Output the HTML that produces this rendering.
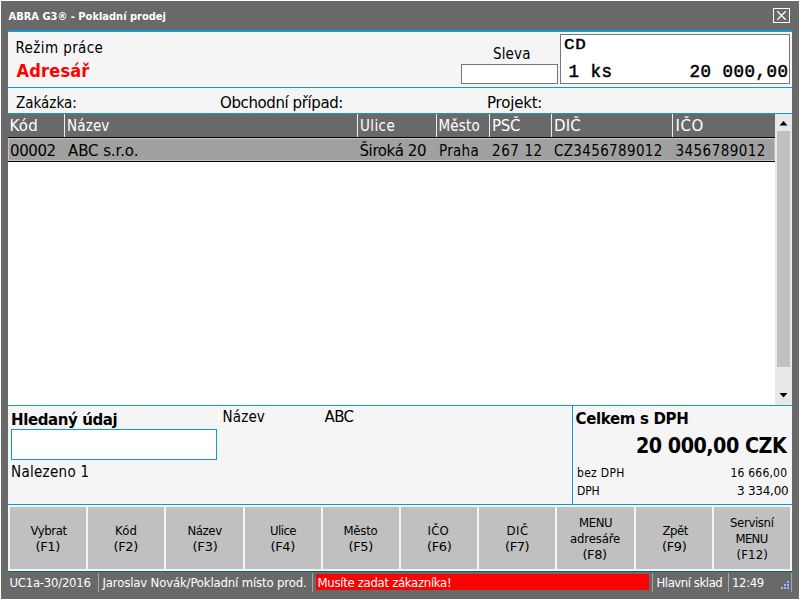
<!DOCTYPE html>
<html lang="cs"><head><meta charset="utf-8"><title>ABRA G3 - Pokladní prodej</title>
<style>
*{box-sizing:border-box;margin:0;padding:0}
html,body{width:800px;height:600px;overflow:hidden;background:#fff;color:#000}
.a{position:absolute}
.t{position:absolute;white-space:nowrap;line-height:1}
.c{font-family:"DejaVu Sans Condensed","DejaVu Sans","Liberation Sans",sans-serif}
.d{font-family:"DejaVu Sans","Liberation Sans",sans-serif}
.m{font-family:"Liberation Mono","DejaVu Sans Mono",monospace;-webkit-text-stroke:0.5px #000}
#win{position:absolute;left:1px;top:1px;width:798px;height:598px;background:#696969}
#content{left:8px;top:30px;width:784px;height:542px;background:#f5f5f5}
.bl{position:absolute;background:#1396d6;height:1px;left:8px;width:784px}
.sep{position:absolute;top:114px;width:1px;height:23px;background:#efefef}
.btn{position:absolute;top:507px;height:62px;background:#c0c0c0}
.ssep{position:absolute;top:573px;width:1px;height:19px;background:#a5a5a5}
.dot{position:absolute;width:2px;height:2px;background:#9bb8ff}
</style></head><body>
<div id="win"></div>
<div class="t c" style="left:8.5px;top:11px;font-size:11px;font-weight:bold;color:#fff">ABRA G3® - Pokladní prodej</div>
<svg class="a" style="left:773px;top:8px" width="17" height="15" viewBox="0 0 17 15"><rect x="0.5" y="0.5" width="16" height="14" fill="none" stroke="#fff"/><path d="M4.3 3.3 L12.7 11.7 M12.7 3.3 L4.3 11.7" stroke="#fff" stroke-width="1.3"/></svg>
<div class="a" id="content"></div>
<div class="bl" style="top:30px;height:2px"></div>
<div class="t c" style="left:15.5px;top:41px;font-size:15px;letter-spacing:0.4px">Režim práce</div>
<div class="t c" style="left:16.5px;top:62px;font-size:18px;letter-spacing:0.2px;font-weight:bold;color:#ff0000">Adresář</div>
<div class="t c" style="left:493px;top:47px;font-size:15px;letter-spacing:0.15px">Sleva</div>
<div class="a" style="left:461px;top:64px;width:97px;height:20px;background:#fff;border:1px solid #767676"></div>
<div class="a" style="left:560px;top:34px;width:230px;height:50px;background:#fff;border:1px solid #767676"></div>
<div class="t m" style="left:563.5px;top:37.5px;font-size:15.5px;letter-spacing:0.7px;transform:scaleX(1.13);transform-origin:0 0">CD</div>
<div class="t m" style="left:568.5px;top:64px;font-size:17.5px;letter-spacing:0.5px">1 ks</div>
<div class="t m" style="left:689.5px;top:64px;font-size:17.5px;letter-spacing:0.5px">20 000,00</div>
<div class="bl" style="top:87px"></div>
<div class="t c" style="left:16px;top:96px;font-size:15px">Zakázka:</div>
<div class="t d" style="left:220px;top:96px;font-size:15px;letter-spacing:-0.4px">Obchodní případ:</div>
<div class="t d" style="left:487px;top:96px;font-size:15px;letter-spacing:-0.2px">Projekt:</div>
<div class="bl" style="top:113px"></div>
<div class="a" style="left:8px;top:114px;width:767px;height:24px;background:#696969;border-bottom:1px solid #000"></div>
<div class="a" style="left:8px;top:138px;width:767px;height:267px;background:#fff"></div>
<div class="a" style="left:8px;top:138px;width:767px;height:23px;background:#a0a0a0;border:1px solid #c4c4c4"></div>
<div class="a" style="left:8px;top:161px;width:767px;height:1px;background:#000"></div>
<div class="sep" style="left:64px"></div>
<div class="sep" style="left:357px"></div>
<div class="sep" style="left:436px"></div>
<div class="sep" style="left:489px"></div>
<div class="sep" style="left:551px"></div>
<div class="sep" style="left:672px"></div>
<div class="t d" style="left:9.5px;top:119px;font-size:15px;letter-spacing:0.2px;color:#fff">Kód</div>
<div class="t c" style="left:67px;top:119px;font-size:15px;letter-spacing:0.15px;color:#fff">Název</div>
<div class="t c" style="left:360px;top:119px;font-size:15px;letter-spacing:0.4px;color:#fff">Ulice</div>
<div class="t c" style="left:438.5px;top:119px;font-size:15px;letter-spacing:0.2px;color:#fff">Město</div>
<div class="t d" style="left:492px;top:119px;font-size:15px;letter-spacing:-0.3px;color:#fff">PSČ</div>
<div class="t d" style="left:554px;top:119px;font-size:15px;letter-spacing:0.2px;color:#fff">DIČ</div>
<div class="t d" style="left:675.5px;top:119px;font-size:15px;letter-spacing:0.5px;color:#fff">IČO</div>
<div class="t d" style="left:10px;top:144px;font-size:15px;letter-spacing:-0.4px">00002</div>
<div class="t d" style="left:68px;top:144px;font-size:15px;letter-spacing:-0.1px">ABC s.r.o.</div>
<div class="t d" style="left:359.5px;top:144px;font-size:15px;letter-spacing:-0.4px">Široká 20</div>
<div class="t c" style="left:439px;top:144px;font-size:15px;letter-spacing:0.3px">Praha</div>
<div class="t c" style="left:492px;top:144px;font-size:15px;letter-spacing:0.6px">267 12</div>
<div class="t c" style="left:554px;top:144px;font-size:15px;letter-spacing:0.35px">CZ3456789012</div>
<div class="t c" style="left:675.5px;top:144px;font-size:15px;letter-spacing:0.45px">3456789012</div>
<div class="a" style="left:775px;top:114px;width:17px;height:291px;background:#e8e8e8"></div>
<div class="a" style="left:777px;top:131px;width:13px;height:236px;background:#c0c0c0"></div>
<svg class="a" style="left:779px;top:120px" width="9" height="6" viewBox="0 0 9 6"><path d="M0.5 5.5 L4.5 1 L8.5 5.5 Z" fill="#000"/></svg>
<svg class="a" style="left:779px;top:393px" width="9" height="6" viewBox="0 0 9 6"><path d="M0.5 0 L4.5 4.5 L8.5 0 Z" fill="#000"/></svg>
<div class="bl" style="top:405px"></div>
<div class="t d" style="left:11px;top:413px;font-size:15px;letter-spacing:-0.4px;font-weight:bold">Hledaný údaj</div>
<div class="a" style="left:11px;top:429px;width:206px;height:31px;background:#fff;border:1px solid #1396d6"></div>
<div class="t c" style="left:11px;top:465px;font-size:15px;letter-spacing:0.3px">Nalezeno 1</div>
<div class="t c" style="left:222.5px;top:410px;font-size:15px;letter-spacing:0.15px">Název</div>
<div class="t d" style="left:324.5px;top:410px;font-size:15px;letter-spacing:-0.6px">ABC</div>
<div class="a" style="left:572px;top:406px;width:1px;height:98px;background:#1396d6"></div>
<div class="t d" style="left:575.5px;top:412px;font-size:15px;letter-spacing:-0.35px;font-weight:bold">Celkem s DPH</div>
<div class="t c" style="left:636px;top:435px;font-size:21.3px;letter-spacing:-0.5px;font-weight:bold">20 000,00 CZK</div>
<div class="t c" style="left:577px;top:467px;font-size:12px;letter-spacing:0.3px">bez DPH</div>
<div class="t c" style="left:730.5px;top:467px;font-size:12px;letter-spacing:0.2px">16 666,00</div>
<div class="t c" style="left:577px;top:485px;font-size:12px;letter-spacing:-0.1px">DPH</div>
<div class="t d" style="left:737px;top:485px;font-size:12px;letter-spacing:-0.25px">3 334,00</div>
<div class="bl" style="top:504px"></div>
<div class="btn" style="left:10px;width:76px"></div>
<div class="btn" style="left:88px;width:76px"></div>
<div class="btn" style="left:166px;width:77px"></div>
<div class="btn" style="left:245px;width:76px"></div>
<div class="btn" style="left:323px;width:76px"></div>
<div class="btn" style="left:401px;width:76px"></div>
<div class="btn" style="left:479px;width:76px"></div>
<div class="btn" style="left:557px;width:77px"></div>
<div class="btn" style="left:636px;width:76px"></div>
<div class="btn" style="left:714px;width:76px"></div>
<div class="t c" style="left:30.5px;top:524px;font-size:13px;letter-spacing:-0.4px">Vybrat</div>
<div class="t d" style="left:35.5px;top:540px;font-size:13px;letter-spacing:-0.35px">(F1)</div>
<div class="t c" style="left:115px;top:524px;font-size:13px;letter-spacing:0.2px">Kód</div>
<div class="t d" style="left:113.5px;top:540px;font-size:13px;letter-spacing:-0.35px">(F2)</div>
<div class="t c" style="left:187.5px;top:524px;font-size:13px;letter-spacing:-0.4px">Název</div>
<div class="t d" style="left:192.5px;top:540px;font-size:13px;letter-spacing:-0.2px">(F3)</div>
<div class="t c" style="left:270px;top:524px;font-size:13px;letter-spacing:-0.55px">Ulice</div>
<div class="t d" style="left:270.5px;top:540px;font-size:13px;letter-spacing:-0.35px">(F4)</div>
<div class="t c" style="left:343.5px;top:524px;font-size:13px;letter-spacing:-0.25px">Město</div>
<div class="t d" style="left:348.5px;top:540px;font-size:13px;letter-spacing:-0.35px">(F5)</div>
<div class="t c" style="left:427.5px;top:524px;font-size:13px;letter-spacing:0.2px">IČO</div>
<div class="t d" style="left:427px;top:540px;font-size:13px;letter-spacing:-0.35px">(F6)</div>
<div class="t c" style="left:506.5px;top:524px;font-size:13px;letter-spacing:0.5px">DIČ</div>
<div class="t d" style="left:505px;top:540px;font-size:13px;letter-spacing:-0.4px">(F7)</div>
<div class="t c" style="left:579px;top:516px;font-size:13px;letter-spacing:-0.4px">MENU</div>
<div class="t c" style="left:570px;top:532px;font-size:13px;letter-spacing:-0.15px">adresáře</div>
<div class="t d" style="left:582.5px;top:548px;font-size:13px;letter-spacing:-0.45px">(F8)</div>
<div class="t c" style="left:662.5px;top:524px;font-size:13px;letter-spacing:-0.5px">Zpět</div>
<div class="t d" style="left:662px;top:540px;font-size:13px;letter-spacing:-0.35px">(F9)</div>
<div class="t c" style="left:730px;top:516px;font-size:13px;letter-spacing:-0.35px">Servisní</div>
<div class="t c" style="left:735.5px;top:532px;font-size:13px;letter-spacing:-0.7px">MENU</div>
<div class="t c" style="left:736.5px;top:548px;font-size:13px;letter-spacing:0.15px">(F12)</div>
<div class="bl" style="top:571px;background:#0f5f91"></div>
<div class="a" style="left:8px;top:572px;width:784px;height:20px;background:#696969"></div>
<div class="ssep" style="left:98px"></div>
<div class="ssep" style="left:312px"></div>
<div class="ssep" style="left:652px"></div>
<div class="ssep" style="left:728px"></div>
<div class="ssep" style="left:791px"></div>
<div class="a" style="left:316px;top:574px;width:333px;height:16px;background:#ff0000"></div>
<div class="t c" style="left:9.5px;top:576px;font-size:13px;letter-spacing:-0.25px;color:#fff">UC1a-30/2016</div>
<div class="t c" style="left:102.5px;top:576px;font-size:13px;letter-spacing:-0.15px;color:#fff">Jaroslav Novák/Pokladní místo prod.</div>
<div class="t c" style="left:317.5px;top:576px;font-size:13px;letter-spacing:-0.3px;color:#fff">Musíte zadat zákazníka!</div>
<div class="t c" style="left:656.5px;top:576px;font-size:13px;letter-spacing:-0.45px;color:#fff">Hlavní sklad</div>
<div class="t c" style="left:732px;top:576px;font-size:13px;letter-spacing:-0.35px;color:#fff">12:49</div>
<div class="dot" style="left:787px;top:581px"></div>
<div class="dot" style="left:784px;top:584px"></div>
<div class="dot" style="left:787px;top:584px"></div>
<div class="dot" style="left:781px;top:587px"></div>
<div class="dot" style="left:784px;top:587px"></div>
<div class="dot" style="left:787px;top:587px"></div>
</body></html>
